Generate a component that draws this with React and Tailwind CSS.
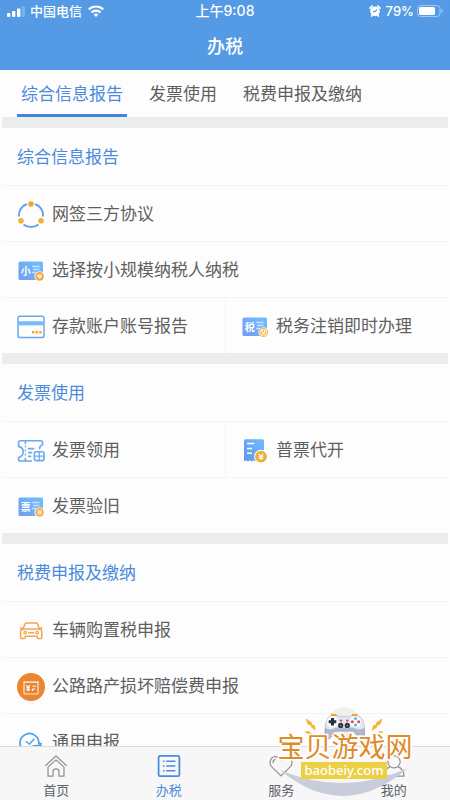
import React from "react";

const BLUE = "#6aa9ee";
const ORANGE = "#f3a536";

function Svg({ children, className = "h-7 w-7" }) {
  return (
    <svg viewBox="0 0 28 28" fill="none" className={className} aria-hidden="true">
      {children}
    </svg>
  );
}

function AgreementIcon() {
  return (
    <Svg>
      <g stroke="#6a9fec" strokeWidth="2">
        <path d="M10 3A11.800 11.800 0 0 0 2 15.500" />
        <path d="M18 3A11.800 11.800 0 0 1 26 15.500" />
        <path d="M6.500 23.400a11.800 11.800 0 0 0 15 0" />
      </g>
      <circle cx="14" cy="3" r="2.800" fill="#eda63c" />
      <circle cx="4" cy="19.800" r="2.800" fill="#f0b23c" />
      <circle cx="24" cy="19.800" r="2.800" fill="#f0b23c" />
    </Svg>
  );
}

function CardBadgeIcon({ char, id, children }) {
  return (
    <Svg>
      <defs>
        <linearGradient id={id} x1="1" y1="0" x2="0" y2="1">
          <stop stopColor="#6fc0fc" />
          <stop offset="1" stopColor="#729bf2" />
        </linearGradient>
      </defs>
      <rect x="1.500" y="4.500" width="24.500" height="18.500" rx="1.500" fill={`url(#${id})`} />
      <text x="3.800" y="17.600" fontSize="10" fontWeight="700" fill="#fff">{char}</text>
      <path d="M15 9.500h7.500M16 12.500h6.500M15 15.500h4" stroke="#c3e2ff" strokeWidth="1.300" />
      <circle cx="22.600" cy="19.400" r="5.200" fill="#fff" />
      {children}
    </Svg>
  );
}

function SmallScaleIcon() {
  return (
    <CardBadgeIcon char="小" id="card-small">
      <circle cx="22.600" cy="19.400" r="4.300" fill={ORANGE} />
      <path d="M20.400 17.400h4.400v2.300l-2.200 2.100-2.200-2.100z" fill="#fff" />
      <path d="m21.800 18.400.8 1 .8-1" stroke={ORANGE} strokeWidth=".8" />
    </CardBadgeIcon>
  );
}

function CancelIcon() {
  return (
    <CardBadgeIcon char="税" id="card-tax">
      <circle cx="22.600" cy="19.400" r="4.100" fill="#fff6e0" stroke="#f3bd68" strokeWidth="1.200" />
      <path d="M22.600 16.600v2.800M20.800 18.200a2.300 2.300 0 1 0 3.600 0" stroke={ORANGE} strokeWidth="1" />
    </CardBadgeIcon>
  );
}

function VerifyIcon() {
  return (
    <CardBadgeIcon char="票" id="card-ticket">
      <circle cx="22.600" cy="19.400" r="4.300" fill="#f6b24e" />
      <rect x="21" y="17.800" width="3.200" height="3.200" rx=".6" fill="#fbd9a0" stroke="#fff" strokeWidth=".6" />
    </CardBadgeIcon>
  );
}

function DepositIcon() {
  return (
    <Svg>
      <rect x="1" y="3.200" width="26" height="21.400" rx="2.200" fill="#fff" stroke={BLUE} strokeWidth="1.500" />
      <path d="M1.700 8.200h24.600v4.200H1.700z" fill="#7db8f7" />
      <path d="M15 19.200h2.400M18.600 19.200H21M22.200 19.200h2.400" stroke={ORANGE} strokeWidth="2.400" />
    </Svg>
  );
}

function ClaimIcon() {
  return (
    <Svg>
      <g stroke={BLUE} strokeWidth="1.600" strokeLinecap="round" strokeLinejoin="round">
        <path d="M14.500 24H3.400a1.800 1.800 0 0 1-1.800-1.800v-1.600c3.200-.8 4.600-3.200 4.600-6s-1.400-4.400-4.600-5.200V5.600a1.800 1.800 0 0 1 1.800-1.800h20.400a1.800 1.800 0 0 1 1.800 1.800v2.200c-2 .6-3 1.800-3 3.800" />
        <path d="M8.400 4v2.400M8.400 21.400V24M8.400 9.400v.4M8.400 13.400v.4M8.400 17.400v.4M11.600 11.600h5M11.600 15.600h3M11.600 19.400h2" />
        <rect x="17.400" y="14.800" width="9.600" height="8.800" rx="1.800" />
        <path d="M22.200 14.800v8.800M17.400 19.200H27" strokeWidth="1.300" />
      </g>
    </Svg>
  );
}

function IssueIcon() {
  return (
    <Svg>
      <defs>
        <linearGradient id="issue-paper" x1="1" y1="0" x2="0" y2="1">
          <stop stopColor="#6fbcfb" />
          <stop offset="1" stopColor="#6494ee" />
        </linearGradient>
      </defs>
      <path d="M4.400 2.200h17a1.600 1.600 0 0 1 1.600 1.600v20.800l-2-1.400-2 1.400-2-1.400-2 1.400-2-1.400-2 1.400-2-1.400-2 1.400-2-1.400-2 1.200V3.800a1.600 1.600 0 0 1 1.400-1.600z" fill="url(#issue-paper)" />
      <path d="M6 6.600h7.400M6 11.400h5M6 16.200h5" stroke="#fff" strokeWidth="1.500" />
      <circle cx="20" cy="19.600" r="6.900" fill="#fff" />
      <circle cx="20" cy="19.600" r="5.900" fill="#efae35" />
      <path d="m17.800 16.800 2.200 2.600 2.200-2.600M20 19.200v3.600M17.800 19.600h4.400M17.800 21.400h4.400" stroke="#fff" strokeWidth="1.100" />
    </Svg>
  );
}

function CarIcon() {
  return (
    <Svg>
      <g stroke="#f3a550" strokeWidth="1.500" strokeLinejoin="round" strokeLinecap="round">
        <path d="M5.600 12.600 8 7a1.600 1.600 0 0 1 1.500-1h9.400a1.600 1.600 0 0 1 1.500 1l2.400 5.600" />
        <path d="M3.600 10.600 5.800 12h16.800l2.200-1.400" />
        <path d="M6 12c-1.600 0-2.400 1.200-2.400 2.600V20.600a1 1 0 0 0 1 1h2.600a1 1 0 0 0 1-1v-1.400h12v1.400a1 1 0 0 0 1 1h2.600a1 1 0 0 0 1-1v-6c0-1.400-.8-2.600-2.400-2.600" />
        <path d="M11.800 15.800h4.800" />
      </g>
      <circle cx="8.200" cy="15.600" r="1.300" stroke="#f3a550" strokeWidth="1.200" />
      <circle cx="20.200" cy="15.600" r="1.300" stroke="#f3a550" strokeWidth="1.200" />
    </Svg>
  );
}

function RoadFeeIcon() {
  return (
    <Svg>
      <circle cx="14" cy="14" r="14" fill="#ea8632" />
      <path d="M7 8.600q1.200 1.400 2.300 0 1.200 1.400 2.300 0 1.200 1.400 2.400 0 1.200 1.400 2.300 0 1.200 1.400 2.300 0 1.200 1.400 2.400 0V20a1 1 0 0 1-1 1H8a1 1 0 0 1-1-1z" stroke="#ffe7cf" strokeWidth="1.200" strokeLinejoin="round" />
      <path d="m9.200 12 1.900 2.200 1.900-2.200M11.100 14.200v4M9.200 14.800H13M9.200 16.600H13M15.400 13.200H19M15.400 16h2.600M15.400 16v2" stroke="#fff" strokeWidth="1.100" />
    </Svg>
  );
}

function GeneralIcon() {
  return (
    <Svg>
      <g stroke="#4da3ea" strokeWidth="1.700" strokeLinecap="round" strokeLinejoin="round">
        <path d="M7 21.600A9.400 9.400 0 1 1 21.800 14.600h2.400l-2 2.600M12 20.600c1.400-3 6-4.600 12.400-3.600" />
        <path d="m9.400 12.400 3 2.800 4.600-5.200" strokeWidth="1.400" />
      </g>
    </Svg>
  );
}

const sections = [
  {
    title: "综合信息报告",
    items: [
      { label: "网签三方协议", Icon: AgreementIcon, full: true },
      { label: "选择按小规模纳税人纳税", Icon: SmallScaleIcon, full: true },
      { label: "存款账户账号报告", Icon: DepositIcon },
      { label: "税务注销即时办理", Icon: CancelIcon, right: true },
    ],
  },
  {
    title: "发票使用",
    items: [
      { label: "发票领用", Icon: ClaimIcon },
      { label: "普票代开", Icon: IssueIcon, right: true },
      { label: "发票验旧", Icon: VerifyIcon, full: true },
    ],
  },
  {
    title: "税费申报及缴纳",
    items: [
      { label: "车辆购置税申报", Icon: CarIcon, full: true },
      { label: "公路路产损坏赔偿费申报", Icon: RoadFeeIcon, full: true },
      { label: "通用申报", Icon: GeneralIcon, full: true },
    ],
  },
];

function StatusBar() {
  return (
    <div className="flex h-[22px] items-center px-[7px] text-[13px] font-medium leading-[22px]">
      <div className="flex flex-1 items-center">
        <svg viewBox="0 0 18 11" className="h-[11px] w-[18px]" aria-hidden="true">
          <rect x="0" y="7" width="3.400" height="4" rx="1" fill="#fff" />
          <rect x="5" y="5" width="3.400" height="6" rx="1" fill="#fff" />
          <rect x="10" y="2.500" width="3.400" height="8.500" rx="1" fill="#fff" />
          <rect x="14.600" y="0" width="3.400" height="11" rx="1" fill="#7cb1f0" />
        </svg>
        <span className="ml-[5px]">中国电信</span>
        <svg viewBox="0 0 16 12" className="ml-[6px] h-3 w-4" fill="none" stroke="#fff" strokeWidth="2.200" aria-hidden="true">
          <path d="M.8 4.400a10.400 10.400 0 0 1 14.400 0M3.400 7.500a6.600 6.600 0 0 1 9.200 0" />
          <path d="M8 12 5.700 9.600a3.300 3.300 0 0 1 4.600 0z" fill="#fff" stroke="none" />
        </svg>
      </div>
      <span className="text-[14px]">上午9:08</span>
      <div className="flex flex-1 items-center justify-end">
        <svg viewBox="0 0 12 12" className="h-3 w-3" aria-hidden="true">
          <circle cx="6" cy="6.300" r="4.800" fill="#fff" />
          <path d="M1 3.200 3.200 1M11 3.200 8.800 1M2.600 11l1-1.400M9.400 11l-1-1.400" stroke="#fff" strokeWidth="1.700" strokeLinecap="round" />
          <path d="M8 4.400 6 6.600H4" stroke="#559ae5" strokeWidth="1.100" fill="none" />
        </svg>
        <span className="ml-[5px] text-[13px]">79%</span>
        <svg viewBox="0 0 26 12" className="ml-[3px] h-3 w-[26px]" aria-hidden="true">
          <rect x=".5" y=".5" width="22.500" height="11" rx="3" fill="none" stroke="#9fc8f5" />
          <rect x="2" y="2" width="16" height="8" rx="1.500" fill="#fff" />
          <path d="M24.300 4v4c1.200-.4 1.500-1.200 1.500-2s-.3-1.600-1.500-2z" fill="#9fc8f5" />
        </svg>
      </div>
    </div>
  );
}

function Section({ title, items }) {
  return (
    <section>
      <div className="mx-0.5 h-[11px] bg-[#eceeed]" />
      <h2 className="flex h-[57px] items-center px-[17px] pt-0.5 text-[17px] font-normal text-[#4a8bdb]">{title}</h2>
      <div className="mx-0.5 grid grid-cols-2">
        {items.map(({ label, Icon, full, right }) => (
          <button
            key={label}
            type="button"
            className={`flex h-14 items-center gap-[7px] border-t border-[#f3f4f5] pl-[15px] pt-0.5 text-left text-[17px] text-[#5f5f5f] ${
              full ? "col-span-2" : right ? "border-l" : ""
            }`}
          >
            <Icon />
            <span>{label}</span>
          </button>
        ))}
      </div>
    </section>
  );
}

const tabs = ["综合信息报告", "发票使用", "税费申报及缴纳"];

const navItems = [
  {
    label: "首页",
    art: (
      <>
        <path d="M2.500 13.800 14 3.200l11.500 10.600" />
        <path d="M5.400 15.200V25h5.400v-4.600a3.200 3.200 0 0 1 6.400 0V25h5.400v-9.800L14 7.400z" />
      </>
    ),
  },
  {
    label: "办税",
    active: true,
    art: (
      <>
        <rect x="2.800" y="3" width="22.400" height="22" rx="1.600" strokeWidth="1.900" />
        <path d="M7.400 9h1.800M7.400 14h1.800M7.400 19h1.800M11 9h9.800M11 14h9.800M11 19h9.800" strokeWidth="1.600" />
      </>
    ),
  },
  {
    label: "服务",
    art: (
      <>
        <path d="M14 24.600 3.800 14.600C.8 11 2.200 4.400 7.800 4c3-.2 4.900 1.600 6.200 3.600 1.300-2 3.200-3.800 6.200-3.600 5.600.4 7 7 4 10.600z" />
        <path d="M5.600 11c-.4-2.200.8-3.800 2.600-4.200" />
      </>
    ),
  },
  {
    label: "我的",
    art: (
      <>
        <circle cx="14" cy="9.400" r="6.600" />
        <path d="M9.600 15C5.400 16.400 3.400 19.600 3.200 25h21.600c-.2-5.400-2.200-8.600-6.400-10" />
      </>
    ),
  },
];

function Watermark() {
  return (
    <div className="pointer-events-none absolute bottom-0 right-[34px] h-[96px] w-[142px]">
      <svg viewBox="0 0 142 96" className="absolute inset-0 h-full w-full" aria-hidden="true">
        <circle cx="70" cy="20" r="16.500" fill="#efefed" />
        <path d="M6 66Q70 93 134 64 70 119 6 66z" fill="#c9ccdb" />
        <path d="M56 12.500c4-1.500 8-1 10 .5h9c2-1.500 6-2 10-.5 3 1 4 4 4.600 7 .8 4 1 8 .9 12 0 4-3.500 4.800-5.500 2.300L79.500 27h-18L56.500 33.800c-2 2.500-5.500 1.700-5.500-2.300-.1-4 .1-8 .9-12 .6-3 1.600-6 4.100-7z" fill="#b5b8ca" stroke="#8b90a6" strokeWidth=".7" />
        <path d="M56 12.500c4-1.500 8-1 10 .5h9c2-1.500 6-2 10-.5 3 1 4 4 4.600 7 .3 1.600.5 3 .6 4.500-3 2-8.200 2-10.700-.5h-18c-2.500 2.500-7 2.500-10.200.5.100-1.500.3-2.900.6-4.500.6-3 1.600-6 4.100-7z" fill="#e3e6f0" />
        <path d="M57 11h5.500M78 11h5.500" stroke="#eda23a" strokeWidth="1.800" />
        <circle cx="58.500" cy="17.800" r="5.800" fill="#f8f9fc" />
        <circle cx="81.500" cy="17.800" r="5.800" fill="#f8f9fc" />
        <path d="M58.500 14v7.600M54.700 17.800h7.600" stroke="#1f3340" strokeWidth="3" />
        <circle cx="81.500" cy="14.600" r="1.500" fill="#55b9de" />
        <circle cx="81.500" cy="21" r="1.500" fill="#55b9de" />
        <circle cx="78.300" cy="17.800" r="1.500" fill="#e14a58" />
        <circle cx="84.700" cy="17.800" r="1.500" fill="#e14a58" />
        <circle cx="67" cy="16.600" r="1.200" fill="#d7485a" />
        <circle cx="73.300" cy="16.600" r="1.200" fill="#d7485a" />
        <circle cx="66.700" cy="21.400" r="2.600" fill="#29323c" />
        <circle cx="66.700" cy="21.400" r="1" fill="#5a7c8c" />
        <circle cx="73.300" cy="21.400" r="2.600" fill="#29323c" />
        <circle cx="73.300" cy="21.400" r="1" fill="#5a7c8c" />
        <g fill="#f7b632" stroke="#f0a726" strokeWidth=".6" strokeLinejoin="round">
          <path d="m32 15 5.500 3.500-.3 2 3.300 1.200.7 4.300-4-3 .2-1.600-3.200-1z" />
          <path d="m108 15-5.500 3.500.3 2-3.300 1.200-1.500 4.800 5-3.500-.2-1.600 3.200-1z" />
          <path d="m31 28 4-.6.6 1.400 3 1.400-4.600.2-.4-1.400z" />
          <path d="m109 28-4-.6-.6 1.400-3 1.400 4.600.2.400-1.400z" />
        </g>
      </svg>
      <div className="absolute inset-x-0 top-[30px] text-center text-[27px] leading-[28px] text-[#e08a28] [-webkit-text-stroke:3px_#fff] [paint-order:stroke_fill]">
        宝贝游戏网
      </div>
      <div className="absolute left-[27px] top-[58px] h-[17px] w-[86px] bg-[#ecd044] text-center font-['Noto_Sans'] text-[13px] font-medium leading-[16px] text-white">
        baobeiy.com
      </div>
    </div>
  );
}

export default function App() {
  return (
    <div className="relative flex h-screen flex-col overflow-hidden bg-[#fdfdfd] font-['Inter','Noto_Sans_CJK_SC',sans-serif]">
      <header className="h-[70px] shrink-0 bg-[#559ae5] text-white">
        <StatusBar />
        <h1 className="text-center text-[18px] font-medium leading-[50px]">办税</h1>
      </header>

      <nav className="flex h-[47px] shrink-0 gap-[18px] px-[17px]" aria-label="业务分类">
        {tabs.map((tab, i) => (
          <button
            key={tab}
            type="button"
            className={`border-b-[3px] px-1 pt-1.5 text-[17px] ${
              i === 0 ? "border-[#4385d8] text-[#4a8bdb]" : "border-transparent text-[#5f5f5f]"
            }`}
          >
            {tab}
          </button>
        ))}
      </nav>

      <main className="min-h-0 flex-1 overflow-y-auto [scrollbar-width:none]">
        {sections.map((section) => (
          <Section key={section.title} {...section} />
        ))}
      </main>

      <footer className="h-[54px] shrink-0 border-t border-[#dcdcdc] bg-[#f7f7f8]">
        <nav className="grid grid-cols-4">
          {navItems.map(({ label, art, active }) => (
            <a
              key={label}
              href="#"
              className={`flex flex-col items-center pt-1.5 text-[13px] leading-[18px] ${
                active ? "text-[#4a8bdb]" : "text-[#5b5e6b]"
              }`}
            >
              <svg
                viewBox="0 0 28 28"
                fill="none"
                stroke={active ? "#4a8bdb" : "#8f9194"}
                strokeWidth="1.300"
                strokeLinejoin="round"
                className="mb-0.5 h-[26px] w-[26px]"
                aria-hidden="true"
              >
                {art}
              </svg>
              {label}
            </a>
          ))}
        </nav>
      </footer>

      <Watermark />
    </div>
  );
}
